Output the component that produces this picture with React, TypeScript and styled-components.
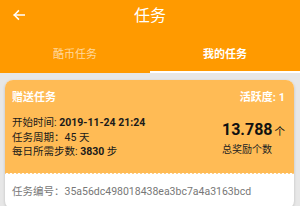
import styled, { createGlobalStyle } from 'styled-components'

const GlobalStyle = createGlobalStyle`
    html, body {
        margin: 0;
        padding: 0;
        background-color: #e7e7e7;
    }
    body {
        font-family: Roboto, 'Noto Sans CJK SC', sans-serif;
    }
`

const Page = styled.div`
    width: 300px;
    height: 206px;
    overflow: hidden;
    background-color: #e7e7e7;
`

const Header = styled.div`
    background-color: #ff9a00;
    color: white;
`

const TopBar = styled.div`
    position: relative;
    height: 32px;
    display: flex;
    align-items: center;
    justify-content: center;
`

const BackButton = styled.div`
    position: absolute;
    left: 12px;
    top: 8px;
    width: 14px;
    height: 14px;
    display: flex;
`

const Title = styled.div`
    font-size: 16px;
    line-height: 20px;
    margin-top: -1px;
`

const Tabs = styled.div`
    display: flex;
    height: 41px;
`

const Tab = styled.div<{ $active?: boolean }>`
    flex: 1;
    display: flex;
    align-items: center;
    justify-content: center;
    font-size: 11px;
    padding-top: 3px;
    font-weight: ${p => p.$active ? 'bold' : 'normal'};
    color: ${p => p.$active ? '#ffffff' : '#ffd89e'};
    border-bottom: 2px solid ${p => p.$active ? '#ffffff' : 'transparent'};
`

const Card = styled.div`
    margin: 7px 6px 0 5px;
    border-radius: 8px;
    overflow: hidden;
    background-color: white;
    box-shadow: 0 1px 3px rgba(0, 0, 0, 0.18);
`

const CardTop = styled.div`
    background-color: #ffbb55;
    padding: 11px 9px 12px 7px;
`

const CardHead = styled.div`
    display: flex;
    justify-content: space-between;
    color: white;
    font-weight: bold;
    font-size: 11px;
    line-height: 14px;
`

const CardBody = styled.div`
    display: flex;
    justify-content: space-between;
    margin-top: 11px;
`

const InfoList = styled.div`
    display: flex;
    flex-direction: column;
`

const InfoRow = styled.div`
    font-size: 10.5px;
    line-height: 14.5px;
    color: #1a1a1a;

    b {
        font-weight: bold;
    }
`

const Reward = styled.div`
    display: flex;
    flex-direction: column;
    padding-top: 4px;
`

const RewardValue = styled.div`
    font-size: 16px;
    font-weight: bold;
    line-height: 20px;
    color: #111;

    span {
        font-size: 10.5px;
        font-weight: normal;
        margin-left: 2px;
    }
`

const RewardLabel = styled.div`
    font-size: 10px;
    line-height: 14px;
    color: #222;
    margin-top: 1px;
`

const Wave = styled.div`
    height: 3px;
    background-color: #ffbb55;
    background-image: radial-gradient(circle at 2px 3.2px, #ffffff 1.9px, transparent 2.4px);
    background-size: 4px 3px;
    background-repeat: repeat-x;
`

const CardFoot = styled.div`
    padding: 10px 7px 10px 7px;
    font-size: 10.5px;
    line-height: 14px;
    color: #777;
`

const BackArrow = () => (
    <svg width="14" height="14" viewBox="0 0 24 24" fill="none" stroke="white" strokeWidth="2.6" strokeLinecap="square">
        <path d="M21 12H4" />
        <path d="M11 5l-7 7 7 7" />
    </svg>
)

const App = () => {
    return (
        <Page>
            <GlobalStyle />
            <Header>
                <TopBar>
                    <BackButton><BackArrow /></BackButton>
                    <Title>{"任务"}</Title>
                </TopBar>
                <Tabs>
                    <Tab>{"酷币任务"}</Tab>
                    <Tab $active>{"我的任务"}</Tab>
                </Tabs>
            </Header>

            <Card>
                <CardTop>
                    <CardHead>
                        <div>{"赠送任务"}</div>
                        <div>{"活跃度: 1"}</div>
                    </CardHead>
                    <CardBody>
                        <InfoList>
                            <InfoRow>{"开始时间: "}<b>{"2019-11-24 21:24"}</b></InfoRow>
                            <InfoRow>{"任务周期：45 天"}</InfoRow>
                            <InfoRow>{"每日所需步数: "}<b>{"3830"}</b>{" 步"}</InfoRow>
                        </InfoList>
                        <Reward>
                            <RewardValue>{"13.788"}<span>{"个"}</span></RewardValue>
                            <RewardLabel>{"总奖励个数"}</RewardLabel>
                        </Reward>
                    </CardBody>
                </CardTop>
                <Wave />
                <CardFoot>{"任务编号：35a56dc498018438ea3bc7a4a3163bcd"}</CardFoot>
            </Card>
        </Page>
    )
}

export default App
